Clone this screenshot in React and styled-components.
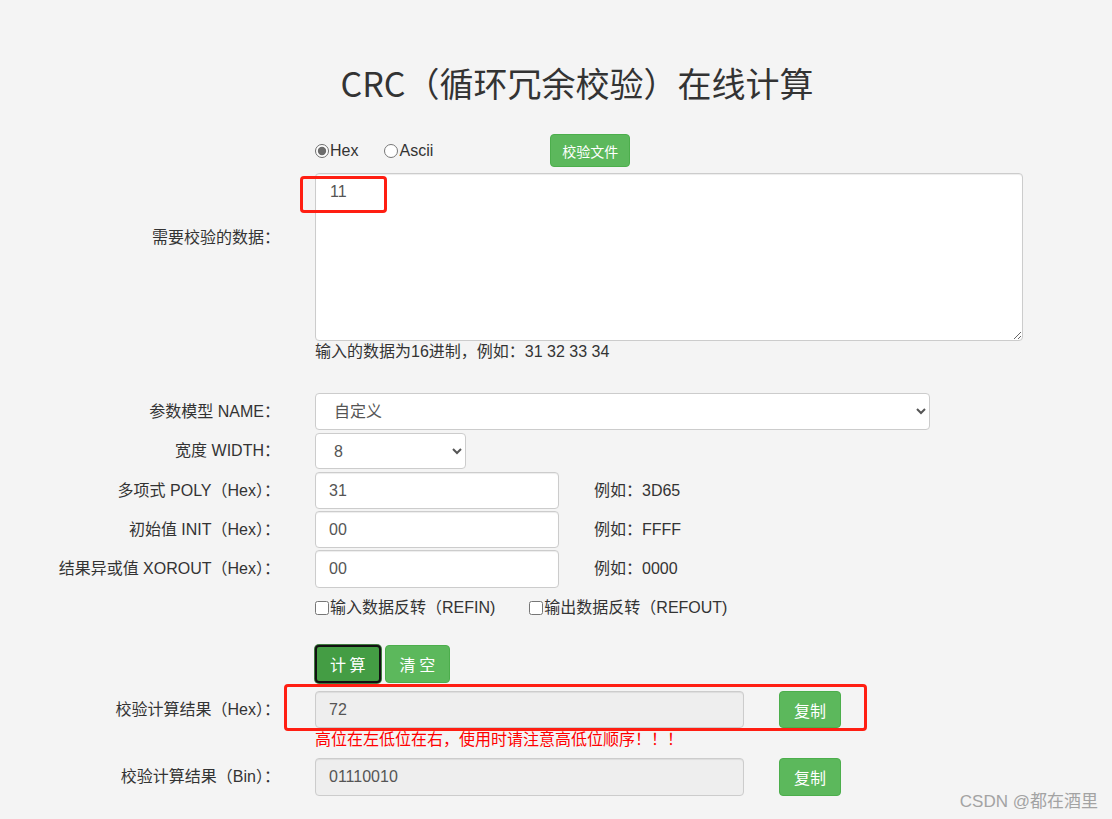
import React, { useState } from "react";
import styled, { createGlobalStyle } from "styled-components";

const GlobalStyle = createGlobalStyle`
  html, body {
    margin: 0;
    padding: 0;
    background: #f4f4f4;
  }
  body {
    font-family: "Liberation Sans", "Noto Sans CJK SC", sans-serif;
    font-size: 16px;
    color: #333;
  }
  * {
    box-sizing: border-box;
  }
`;

const Page = styled.div`
  position: relative;
  width: 1112px;
  min-height: 819px;
  overflow: hidden;
`;

const Title = styled.h1`
  margin: 63px 0 0;
  height: 40px;
  line-height: 40px;
  text-align: center;
  font-family: "Noto Sans CJK SC", "Liberation Sans", sans-serif;
  font-size: 34px;
  font-weight: 400;
  color: #333;
  padding-left: 42px;
`;

const FormRow = styled.div`
  display: grid;
  grid-template-columns: 280px 1fr;
  column-gap: 35px;
  align-items: center;
  margin-top: ${(p) => p.$gap || 0}px;
`;

const Label = styled.label`
  text-align: right;
  white-space: nowrap;
  line-height: 20px;
  align-self: ${(p) => (p.$top ? "start" : "center")};
  padding-top: ${(p) => p.$top || 0}px;
`;

const Control = styled.div`
  display: flex;
  align-items: center;
  gap: ${(p) => p.$gap || 0}px;
`;

const RadioLabel = styled.label`
  display: inline-flex;
  align-items: center;
  margin-right: ${(p) => p.$mr || 0}px;
  line-height: 20px;

  input {
    margin: 0 1px 0 0;
    width: 14px;
    height: 14px;
    accent-color: #6b6b6b;
  }
`;

const Button = styled.button`
  font-family: "Noto Sans CJK SC", "Liberation Sans", sans-serif;
  font-size: ${(p) => p.$size || 16}px;
  color: #fff;
  background: ${(p) => (p.$active ? "#449d44" : "#5cb85c")};
  border: ${(p) => (p.$active ? "2px solid #111" : "1px solid #4cae4c")};
  box-shadow: ${(p) => (p.$active ? "0 0 0 1px #3f7a3f" : "none")};
  border-radius: 4px;
  height: ${(p) => p.$h || 37}px;
  padding: 0 ${(p) => p.$px || 14}px;
  margin-left: ${(p) => p.$ml || 0}px;
  cursor: pointer;
  line-height: 1;
`;

const TextArea = styled.textarea`
  width: 708px;
  height: 168px;
  padding: 8px 14px;
  border: 1px solid #ccc;
  border-radius: 4px;
  background: #fff;
  font-family: "Liberation Sans", "Noto Sans CJK SC", sans-serif;
  font-size: 16px;
  line-height: 20px;
  color: #555;
  box-shadow: inset 0 1px 1px rgba(0, 0, 0, 0.075);
  outline: none;
`;

const Help = styled.div`
  line-height: 20px;
  color: #333;
`;

const Select = styled.select`
  width: ${(p) => p.$w}px;
  height: ${(p) => p.$h || 37}px;
  padding: 0 10px 0 14px;
  border: 1px solid #ccc;
  border-radius: 4px;
  background: #fff;
  font-family: "Liberation Sans", "Noto Sans CJK SC", sans-serif;
  font-size: 16px;
  color: #555;
  outline: none;
`;

const Input = styled.input`
  width: ${(p) => p.$w}px;
  height: ${(p) => p.$h || 37}px;
  padding: 0 13px;
  border: 1px solid #ccc;
  border-radius: 4px;
  background: ${(p) => (p.readOnly ? "#eee" : "#fff")};
  font-family: "Liberation Sans", "Noto Sans CJK SC", sans-serif;
  font-size: 16px;
  color: #555;
  box-shadow: inset 0 1px 1px rgba(0, 0, 0, 0.075);
  outline: none;
`;

const Example = styled.span`
  line-height: 20px;
`;

const CheckLabel = styled.label`
  display: inline-flex;
  align-items: center;
  line-height: 20px;
  margin-right: ${(p) => p.$mr || 0}px;

  input {
    margin: 0 1px 0 0;
    width: 14px;
    height: 14px;
  }
`;

const Warning = styled.div`
  color: #ff0000;
  line-height: 20px;
`;

const Annotation = styled.div`
  position: absolute;
  left: ${(p) => p.$x}px;
  top: ${(p) => p.$y}px;
  width: ${(p) => p.$w}px;
  height: ${(p) => p.$h}px;
  border: 3px solid #ff1e12;
  border-radius: 4px;
  pointer-events: none;
`;

const Watermark = styled.div`
  position: absolute;
  right: 14px;
  bottom: 7px;
  font-size: 17px;
  color: #a3a3a3;
  font-family: "Liberation Sans", "Noto Sans CJK SC", sans-serif;
`;

export default function App() {
  const [mode, setMode] = useState("hex");
  const [data, setData] = useState("11");
  const [model, setModel] = useState("custom");
  const [width, setWidth] = useState("8");
  const [poly, setPoly] = useState("31");
  const [init, setInit] = useState("00");
  const [xorout, setXorout] = useState("00");

  return (
    <Page>
      <GlobalStyle />
      <Title>CRC（循环冗余校验）在线计算</Title>

      <FormRow $gap={31}>
        <Label />
        <Control>
          <RadioLabel $mr={26}>
            <input
              type="radio"
              name="mode"
              checked={mode === "hex"}
              onChange={() => setMode("hex")}
            />
            Hex
          </RadioLabel>
          <RadioLabel>
            <input
              type="radio"
              name="mode"
              checked={mode === "ascii"}
              onChange={() => setMode("ascii")}
            />
            Ascii
          </RadioLabel>
          <Button $size={14} $h={33} $px={11} $ml={117}>
            校验文件
          </Button>
        </Control>
      </FormRow>

      <FormRow $gap={6}>
        <Label $top={55}>需要校验的数据：</Label>
        <Control>
          <TextArea value={data} onChange={(e) => setData(e.target.value)} />
        </Control>
      </FormRow>

      <FormRow $gap={1}>
        <Label />
        <Help>输入的数据为16进制，例如：31 32 33 34</Help>
      </FormRow>

      <FormRow $gap={31}>
        <Label>参数模型 NAME：</Label>
        <Control>
          <Select $w={615} value={model} onChange={(e) => setModel(e.target.value)}>
            <option value="custom">自定义</option>
            <option value="crc8">CRC-8</option>
            <option value="crc16">CRC-16/MODBUS</option>
          </Select>
        </Control>
      </FormRow>

      <FormRow $gap={3}>
        <Label>宽度 WIDTH：</Label>
        <Control>
          <Select $w={151} $h={36} value={width} onChange={(e) => setWidth(e.target.value)}>
            <option value="4">4</option>
            <option value="8">8</option>
            <option value="16">16</option>
            <option value="32">32</option>
          </Select>
        </Control>
      </FormRow>

      <FormRow $gap={3}>
        <Label>多项式 POLY（Hex）：</Label>
        <Control $gap={35}>
          <Input $w={244} value={poly} onChange={(e) => setPoly(e.target.value)} />
          <Example>例如：3D65</Example>
        </Control>
      </FormRow>

      <FormRow $gap={2}>
        <Label>初始值 INIT（Hex）：</Label>
        <Control $gap={35}>
          <Input $w={244} value={init} onChange={(e) => setInit(e.target.value)} />
          <Example>例如：FFFF</Example>
        </Control>
      </FormRow>

      <FormRow $gap={2}>
        <Label>结果异或值 XOROUT（Hex）：</Label>
        <Control $gap={35}>
          <Input $w={244} $h={38} value={xorout} onChange={(e) => setXorout(e.target.value)} />
          <Example>例如：0000</Example>
        </Control>
      </FormRow>

      <FormRow $gap={10}>
        <Label />
        <Control>
          <CheckLabel $mr={34}>
            <input type="checkbox" />
            输入数据反转（REFIN)
          </CheckLabel>
          <CheckLabel>
            <input type="checkbox" />
            输出数据反转（REFOUT)
          </CheckLabel>
        </Control>
      </FormRow>

      <FormRow $gap={27}>
        <Label />
        <Control $gap={4}>
          <Button $active $h={38} $px={13}>
            计 算
          </Button>
          <Button $h={38} $px={14}>
            清 空
          </Button>
        </Control>
      </FormRow>

      <FormRow $gap={8}>
        <Label>校验计算结果（Hex）：</Label>
        <Control $gap={35}>
          <Input $w={429} readOnly value="72" />
          <Button $px={14}>复制</Button>
        </Control>
      </FormRow>

      <FormRow $gap={2}>
        <Label />
        <Warning>高位在左低位在右，使用时请注意高低位顺序！！！</Warning>
      </FormRow>

      <FormRow $gap={8}>
        <Label>校验计算结果（Bin）：</Label>
        <Control $gap={35}>
          <Input $w={429} $h={38} readOnly value="01110010" />
          <Button $h={38} $px={14}>复制</Button>
        </Control>
      </FormRow>

      <Annotation $x={300} $y={176} $w={87} $h={37} />
      <Annotation $x={284} $y={684} $w={583} $h={47} />
      <Watermark>CSDN @都在酒里</Watermark>
    </Page>
  );
}
